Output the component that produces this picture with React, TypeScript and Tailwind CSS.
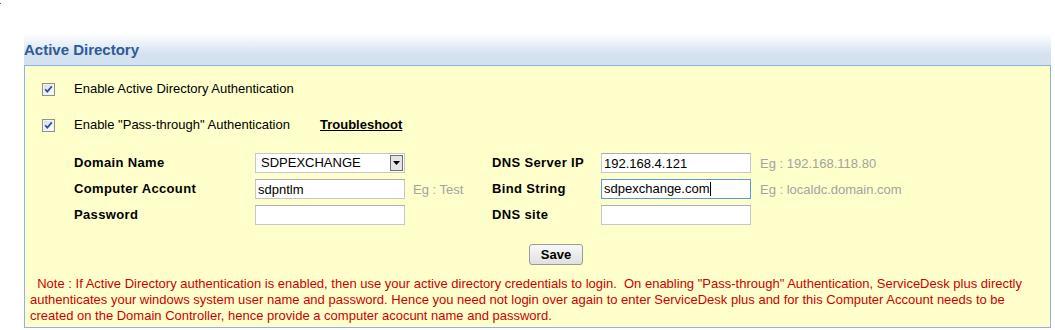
import React from 'react';

const font = { fontFamily: '"Liberation Sans", Arial, sans-serif' };

// Classic blue-check checkbox, 13x13
const CheckBox: React.FC = () => (
  <svg width="13" height="13" viewBox="0 0 13 13" className="shrink-0">
    <defs>
      <linearGradient id="cbfill" x1="0" y1="0" x2="1" y2="1">
        <stop offset="0" stopColor="#dcdcdc" />
        <stop offset="1" stopColor="#ffffff" />
      </linearGradient>
    </defs>
    <rect x="0.5" y="0.5" width="12" height="12" fill="#f4f4f4" stroke="#8e8f8f" />
    <rect x="2" y="2" width="9" height="9" fill="url(#cbfill)" />
    <path d="M3.2 6.2 L5.3 8.6 L9.8 3.4" fill="none" stroke="#2b4fa3" strokeWidth="1.7" />
  </svg>
);

const TextBox: React.FC<{ value?: string }> = ({ value = '' }) => (
  <input
    readOnly
    value={value}
    className="w-[150px] h-[20px] shrink-0 bg-white border border-[#c5c7cc] border-t-[#abadb3] px-[2px] text-[13px] text-black outline-none"
    style={font}
  />
);

const FocusedBox: React.FC<{ value: string }> = ({ value }) => (
  <div className="w-[150px] h-[20px] shrink-0 bg-white border border-[#5b9bd5] px-[2px] flex items-center text-[13px] text-black">
    <span>{value}</span>
    <span className="w-px h-[14px] bg-black" />
  </div>
);

const DomainSelect: React.FC = () => (
  <div className="w-[150px] h-[20px] shrink-0 bg-white border border-[#c5c7cc] flex items-center justify-between pl-[5px] pr-px">
    <span className="text-[13px] text-black">SDPEXCHANGE</span>
    <span className="w-[13px] h-[16px] bg-[#e4e4e4] border border-[#6f6f6f] flex items-center justify-center">
      <svg width="7" height="4" viewBox="0 0 7 4">
        <path d="M0 0 H7 L3.5 4 Z" fill="#000" />
      </svg>
    </span>
  </div>
);

const Label: React.FC<{ w: string; children: React.ReactNode }> = ({ w, children }) => (
  <span className={`${w} shrink-0 font-bold text-[13px] tracking-[0.35px] text-black`}>{children}</span>
);

const Hint: React.FC<{ children: React.ReactNode }> = ({ children }) => (
  <span className="text-[13px] text-[#a3a3a3] whitespace-nowrap">{children}</span>
);

export default function App() {
  return (
    <div className="w-[1055px] h-[330px] bg-white overflow-hidden" style={font}>
      <div className="h-[30px] pt-[3px]">
        <div className="w-px h-px bg-[#e03030]" />
      </div>

      <div className="ml-[24px] w-[1027px]">
        {/* Section header */}
        <div className="h-[35px] pt-[11px] bg-gradient-to-b from-white from-10% to-[#d4e1ef] to-70%">
          <h2 className="text-[15px] leading-[17px] font-bold text-[#2e5a98]">Active Directory</h2>
        </div>

        {/* Panel */}
        <div className="bg-[#ffffcc] border border-[#8db3e2] pt-[13px] pb-[3px]">
          <div className="h-[20px] flex items-center pl-[17px] gap-[19px] text-[13px] text-black">
            <CheckBox />
            <span>Enable Active Directory Authentication</span>
          </div>

          <div className="h-[20px] mt-[16px] flex items-center pl-[17px] text-[13px] text-black">
            <CheckBox />
            <span className="ml-[19px] w-[246px]">Enable &quot;Pass-through&quot; Authentication</span>
            <a className="font-bold underline text-black">Troubleshoot</a>
          </div>

          <div className="mt-[18px] pl-[49px] flex flex-col gap-[6px]">
            <div className="flex items-center h-[20px]">
              <Label w="w-[181px]">Domain Name</Label>
              <DomainSelect />
              <span className="w-[87px]" />
              <Label w="w-[109px]">DNS Server IP</Label>
              <TextBox value="192.168.4.121" />
              <span className="ml-[9px]">
                <Hint>Eg : 192.168.118.80</Hint>
              </span>
            </div>
            <div className="flex items-center h-[20px]">
              <Label w="w-[181px]">Computer Account</Label>
              <TextBox value="sdpntlm" />
              <span className="w-[87px] pl-[8px]">
                <Hint>Eg : Test</Hint>
              </span>
              <Label w="w-[109px]">Bind String</Label>
              <FocusedBox value="sdpexchange.com" />
              <span className="ml-[9px]">
                <Hint>Eg : localdc.domain.com</Hint>
              </span>
            </div>
            <div className="flex items-center h-[20px]">
              <Label w="w-[181px]">Password</Label>
              <TextBox />
              <span className="w-[87px]" />
              <Label w="w-[109px]">DNS site</Label>
              <TextBox />
            </div>
          </div>

          <div className="mt-[19px] flex justify-center pl-[37px]">
            <button className="w-[54px] h-[21px] rounded-[3px] border border-[#9a9a9a] bg-gradient-to-b from-[#f8f8f8] to-[#e0e0e0] text-[13px] font-bold text-black leading-none">
              Save
            </button>
          </div>

          <div className="mt-[11px] pl-[5px] text-[13px] leading-[16px] text-[#cc0000] whitespace-nowrap">
            <p>&nbsp;&nbsp;Note : If Active Directory authentication is enabled, then use your active directory credentials to login.&nbsp;&nbsp;On enabling &quot;Pass-through&quot; Authentication, ServiceDesk plus directly</p>
            <p>authenticates your windows system user name and password. Hence you need not login over again to enter ServiceDesk plus and for this Computer Account needs to be</p>
            <p>created on the Domain Controller, hence provide a computer acocunt name and password.</p>
          </div>
        </div>
      </div>
    </div>
  );
}
